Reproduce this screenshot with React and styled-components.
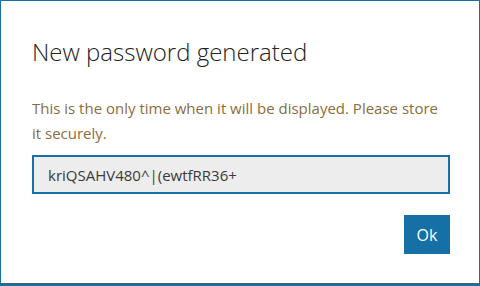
import * as React from "react";
import styled, { createGlobalStyle } from "styled-components";

const GlobalStyle = createGlobalStyle`
  html, body {
    margin: 0;
    padding: 0;
    background: #ffffff;
  }
  body {
    font-family: "Open Sans", "Noto Sans", sans-serif;
  }
`;

const Dialog = styled.div`
  box-sizing: border-box;
  width: 480px;
  height: 286px;
  border: 1px solid #1570a6;
  border-bottom: 2px solid #1570a6;
  box-shadow: inset 0 -1px 0 #4a5a66;
  background: #ffffff;
  padding: 35px 30px 0 31px;
  display: flex;
  flex-direction: column;
`;

const Title = styled.h1`
  margin: 0;
  font-weight: 300;
  font-size: 24px;
  line-height: 32px;
  color: #222222;
`;

const Notice = styled.p`
  margin: 28px 0 0;
  font-size: 15px;
  line-height: 25px;
  color: #8a6d3b;
`;

const PasswordField = styled.input`
  box-sizing: border-box;
  margin-top: 9px;
  width: 418px;
  height: 39px;
  border: 2px solid #1570a6;
  background: #ededed;
  padding: 0 14px;
  font-family: "Open Sans", "Noto Sans", sans-serif;
  font-size: 15px;
  color: #3a3a3a;
  outline: none;
`;

const Footer = styled.div`
  display: flex;
  justify-content: flex-end;
  margin-top: 21px;
  width: 418px;
`;

const OkButton = styled.button`
  width: 46px;
  height: 39px;
  border: none;
  background: #1570a6;
  color: #ffffff;
  font-family: "Open Sans", "Noto Sans", sans-serif;
  font-size: 16px;
  padding: 0;
  cursor: pointer;
`;

const App = () => (
  <>
    <GlobalStyle />
    <Dialog>
      <Title>New password generated</Title>
      <Notice>
        This is the only time when it will be displayed. Please store it
        securely.
      </Notice>
      <PasswordField readOnly value="kriQSAHV480^|(ewtfRR36+" />
      <Footer>
        <OkButton>Ok</OkButton>
      </Footer>
    </Dialog>
  </>
);

export default App;
